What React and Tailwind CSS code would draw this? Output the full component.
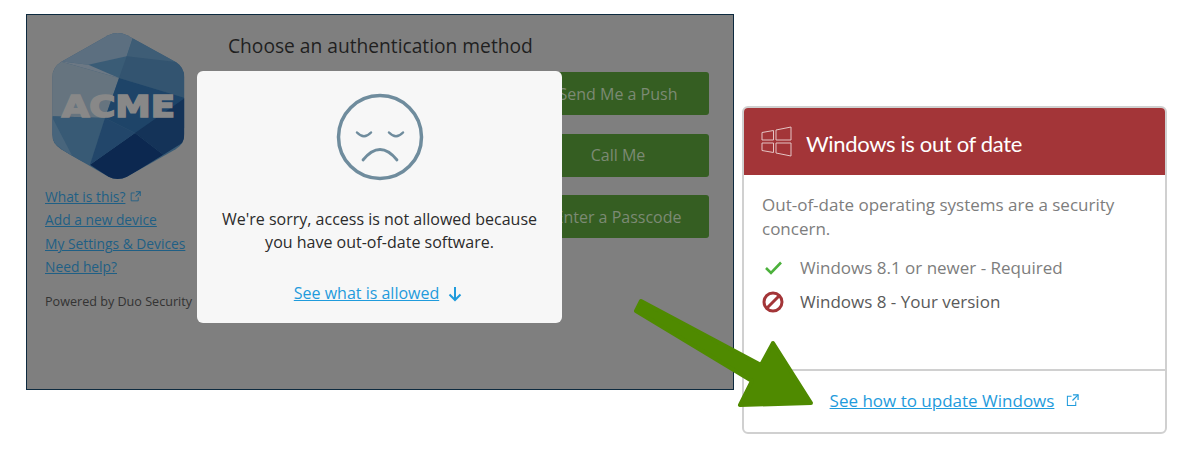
import React from 'react';

const openSans = { fontFamily: '"Open Sans", "Noto Sans", sans-serif' };

// external link glyph used beside links
function ExternalIcon({ className, color }) {
  return <svg className={className} viewBox="0 0 14 14" fill="none" stroke={color} strokeWidth="1.1">
      <path d="M6 2.5H1.5V12.5H10.5V8" />
      <path d="M7.5 1H13V6.5" strokeWidth="1.3" />
      <path d="M13 1L7 7" strokeWidth="1.3" />
    </svg>;
}

function AcmeLogo() {
  return <svg width="145" height="155" viewBox="0 0 435 465" className="block">
      <defs>
        <clipPath id="hex">
          <path d="M190 22Q218 8 246 22L392 102Q418 118 418 148V318Q418 348 392 364L246 446Q218 460 190 446L48 364Q22 348 22 318V148Q22 118 48 102Z" />
        </clipPath>
      </defs>
      <g clipPath="url(#hex)">
        <rect width="435" height="465" fill="#3a5c76" />
        <polygon points="218,0 265,25 245,85 130,110 45,100 40,90" fill="#5c6f80" />
        <polygon points="265,25 420,110 245,85" fill="#3e5d76" />
        <polygon points="245,85 420,105 420,210 222,150" fill="#335470" />
        <polygon points="45,100 222,150 180,270 20,265 20,130" fill="#66747f" />
        <polygon points="45,100 130,110 222,150" fill="#6c7884" />
        <polygon points="222,150 420,210 420,300 270,315 180,270" fill="#1e4468" />
        <polygon points="420,210 420,340 355,380 270,315" fill="#143358" />
        <polygon points="270,315 355,380 218,465 135,410" fill="#0c2850" />
        <polygon points="20,265 180,270 135,410 85,390 20,340" fill="#385a75" />
        <polygon points="180,270 270,315 135,410" fill="#22466a" />
        <polygon points="20,265 85,390 20,340" fill="#48657c" />
      </g>
      <text x="50" y="268" fill="#888888" stroke="#888888" strokeWidth="5" fontSize="93" fontWeight="700" textLength="340" lengthAdjust="spacingAndGlyphs" style={{ fontFamily: '"DejaVu Sans", sans-serif' }}>ACME</text>
    </svg>;
}

function GreenButton({ label }) {
  return <div className="w-[182px] h-[43px] rounded-[3px] bg-[#355e22] text-[#7c8a74] text-[16px] flex items-center justify-center">
      {label}
    </div>;
}

function SideLink({ children }) {
  return <a className="text-[#1f5f85] underline text-[13.8px] leading-[23.3px]">{children}</a>;
}

export default function App() {
  return <div className="w-[1189px] h-[450px] bg-white relative overflow-hidden flex items-start pl-[26px] pt-[14px]" style={openSans}>
      {/* left: dimmed auth prompt */}
      <div className="relative w-[708px] h-[376px] shrink-0 bg-[#7f7f7f] border border-[#0d2a3f] pt-[13px] pl-[18px] pr-[24px] flex">
        <div className="w-[150px] shrink-0">
          <AcmeLogo />
          <div className="flex flex-col mt-[2px] items-start whitespace-nowrap">
            <div className="flex items-center gap-[5px]">
              <SideLink>What is this?</SideLink>
              <ExternalIcon className="w-[11px] h-[11px]" color="#1f5f85" />
            </div>
            <SideLink>Add a new device</SideLink>
            <SideLink>My Settings &amp; Devices</SideLink>
            <SideLink>Need help?</SideLink>
            <p className="text-[12.6px] text-[#333333] mt-[15px] leading-[18px]">Powered by Duo Security</p>
          </div>
        </div>
        <div className="flex-1 flex flex-col items-end">
          <h2 className="w-full mt-[5px] text-[19.2px] leading-[25px] text-[#1f1f1f] pl-[33px] whitespace-nowrap">Choose an authentication method</h2>
          <div className="flex flex-col gap-[18.5px] mt-[14px]">
            <GreenButton label="Send Me a Push" />
            <GreenButton label="Call Me" />
            <GreenButton label="Enter a Passcode" />
          </div>
        </div>

        {/* modal over the prompt */}
        <div className="absolute left-[170px] top-[56px] w-[365px] h-[252px] bg-[#f7f7f7] rounded-[6px] flex flex-col items-center">
          <svg className="mt-[22px]" width="88" height="88" viewBox="0 0 88 88" fill="none" stroke="#6f8c9d" strokeLinecap="round">
            <circle cx="44" cy="44" r="41.5" strokeWidth="3.5" />
            <path d="M21 39.5Q28 47 35 39.5M53 39.5Q60 47 67 39.5" strokeWidth="2.5" />
            <path d="M27 67Q44 46 61 67" strokeWidth="2.8" />
          </svg>
          <p className="mt-[27px] text-center text-[16px] leading-[23px] text-[#2b2b2b]">We're sorry, access is not allowed because<br />you have out-of-date software.</p>
          <div className="mt-[28px] flex items-center gap-[9px] -ml-[3px]">
            <a className="text-[16px] leading-[23px] underline text-[#1f9bdc]">See what is allowed</a>
            <svg width="14" height="16" viewBox="0 0 14 16" fill="none" stroke="#1f9bdc" strokeWidth="2">
              <path d="M7 1V14M1.5 8.5L7 14L12.5 8.5" />
            </svg>
          </div>
        </div>
      </div>

      {/* right: windows card */}
      <div className="ml-[8px] mt-[92px] w-[425px] h-[328px] shrink-0 border-2 border-[#d0d0d0] rounded-[6px] flex flex-col bg-white">
        <div className="h-[67px] bg-[#a33538] flex items-center pl-[17px] gap-[14px] rounded-t-[4px]">
          <svg width="31" height="31" viewBox="0 0 31 31" fill="none" stroke="#e4c4c4" strokeWidth="1">
            <path d="M1 6.5L12.5 4.5V14H1ZM15 4L30 1V14H15ZM1 17H12.5V26.5L1 24.5ZM15 17H30V30L15 27Z" />
          </svg>
          <span className="text-white text-[22px] tracking-[-0.35px] mt-[3px]" style={{ fontFamily: 'Lato, sans-serif' }}>Windows is out of date</span>
        </div>
        <div className="flex-1 pl-[18px] pr-[20px] pt-[18px]">
          <p className="text-[17px] leading-[24px] text-[#7d7d7d]">Out-of-date operating systems are a security concern.</p>
          <div className="mt-[15px] flex items-center h-[24px] text-[17px] text-[#7d7d7d]">
            <svg className="ml-[3px] mr-[18px]" width="17" height="14" viewBox="0 0 17 14" fill="none" stroke="#4cb13c" strokeWidth="2.6">
              <path d="M1 7L6 12L16 1.5" />
            </svg>
            <span>Windows 8.1 or newer - Required</span>
          </div>
          <div className="mt-[10px] flex items-center gap-[16px] h-[24px] text-[17px] text-[#5a5a5a]">
            <svg width="22" height="22" viewBox="0 0 22 22" fill="none" stroke="#a33538" strokeWidth="3">
              <circle cx="11" cy="11" r="9" />
              <path d="M5 17L17 5" />
            </svg>
            <span>Windows 8 - Your version</span>
          </div>
        </div>
        <div className="h-[63px] border-t-2 border-[#d0d0d0] flex items-center justify-center gap-[12px] pb-[2px]">
          <a className="text-[17px] underline text-[#1f9bdc]">See how to update Windows</a>
          <ExternalIcon className="w-[13px] h-[13px]" color="#1f9bdc" />
        </div>
      </div>

      {/* annotation arrow over both panels */}
      <svg className="absolute left-0 top-0 pointer-events-none" width="1189" height="450" fill="#4f8a00" stroke="#4f8a00" strokeLinejoin="round">
        <polygon points="641,301 636,311 752,381 740,405 811,403 773,343 761,365" strokeWidth="4" />
      </svg>
    </div>;
}
